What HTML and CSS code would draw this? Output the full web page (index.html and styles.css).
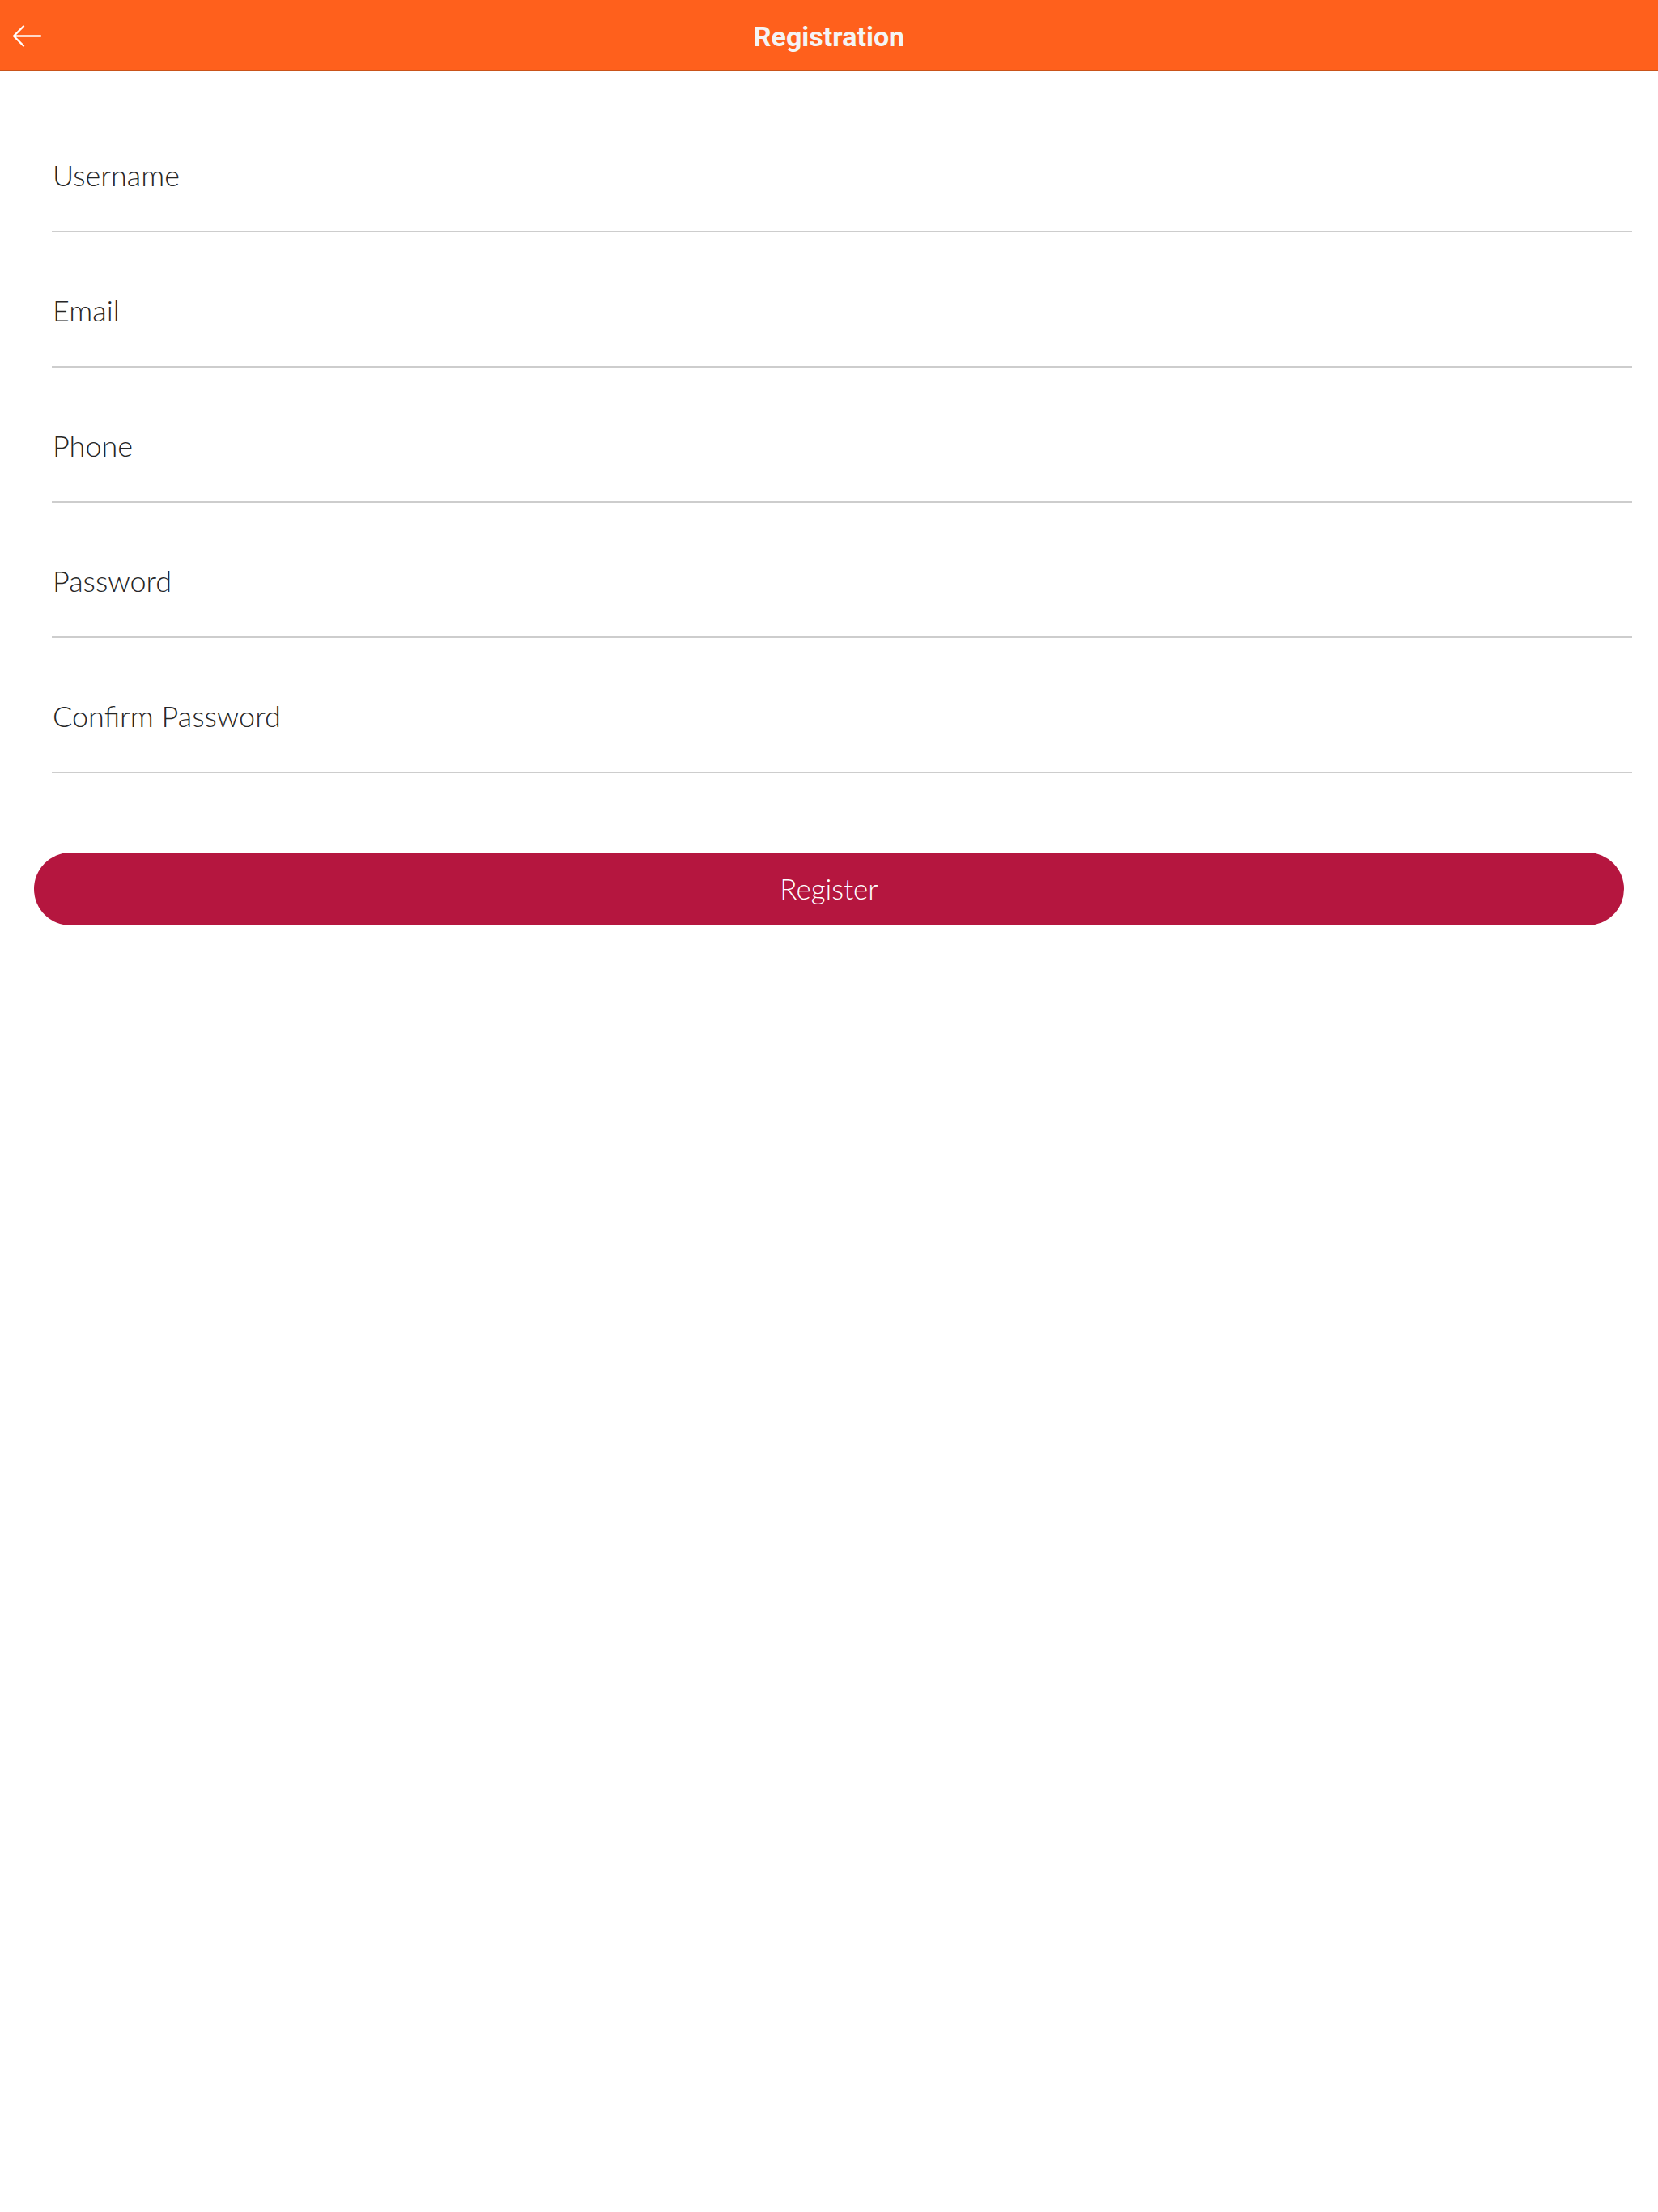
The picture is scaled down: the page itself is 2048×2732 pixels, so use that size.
FILE: index.html
```html
<!DOCTYPE html>
<html>
<head>
<meta charset="utf-8">
<link rel="stylesheet" href="styles.css">
</head>
<body>
<header class="topbar">
  <svg class="back" width="60" height="88" viewBox="0 0 60 88">
    <path d="M50 44.5 H17.5 M29 32.5 L17 44.5 L29 56.5" fill="none" stroke="#ffffff" stroke-width="2.4" stroke-linecap="round" stroke-linejoin="round"/>
  </svg>
  <h1 class="title">Registration</h1>
</header>
<main class="form">
  <div class="field"><span class="label">Username</span></div>
  <div class="field"><span class="label">Email</span></div>
  <div class="field"><span class="label">Phone</span></div>
  <div class="field"><span class="label">Password</span></div>
  <div class="field"><span class="label">Confirm Password</span></div>
</main>
<div class="actions">
  <button class="register">Register</button>
</div>
</body>
</html>
```
FILE: styles.css
```css
html, body {
  margin: 0;
  padding: 0;
  background: #ffffff;
}
body {
  width: 2048px;
  min-height: 2732px;
  font-family: "Lato", "Liberation Sans", sans-serif;
}
.topbar {
  position: relative;
  height: 87px;
  background: #ff601c;
  border-bottom: 1px solid #c9531a;
  display: flex;
  align-items: center;
  justify-content: center;
}
.back {
  position: absolute;
  left: 0;
  top: 0;
}
.title {
  margin: 0;
  padding-top: 3px;
  font-family: "Roboto", "Liberation Sans", sans-serif;
  font-weight: 700;
  font-size: 34px;
  line-height: 84px;
  color: #f4f4f4;
}
.form {
  padding: 32px 32px 0 64px;
}
.field {
  height: 165px;
  border-bottom: 2px solid #cdcdcd;
  display: flex;
  align-items: flex-end;
}
.label {
  font-family: "Lato", "Liberation Sans", sans-serif;
  font-weight: 300;
  font-size: 36px;
  line-height: 40px;
  color: #262626;
  padding-bottom: 49px;
  padding-left: 1px;
}
.actions {
  padding: 98px 42px 0 42px;
}
.register {
  display: block;
  width: 100%;
  height: 90px;
  border: none;
  border-radius: 45px;
  background: #b5163f;
  color: #ffffff;
  font-family: "Lato", "Liberation Sans", sans-serif;
  font-weight: 300;
  font-size: 35px;
  padding: 0 0 2px 0;
  margin: 0;
}
```
